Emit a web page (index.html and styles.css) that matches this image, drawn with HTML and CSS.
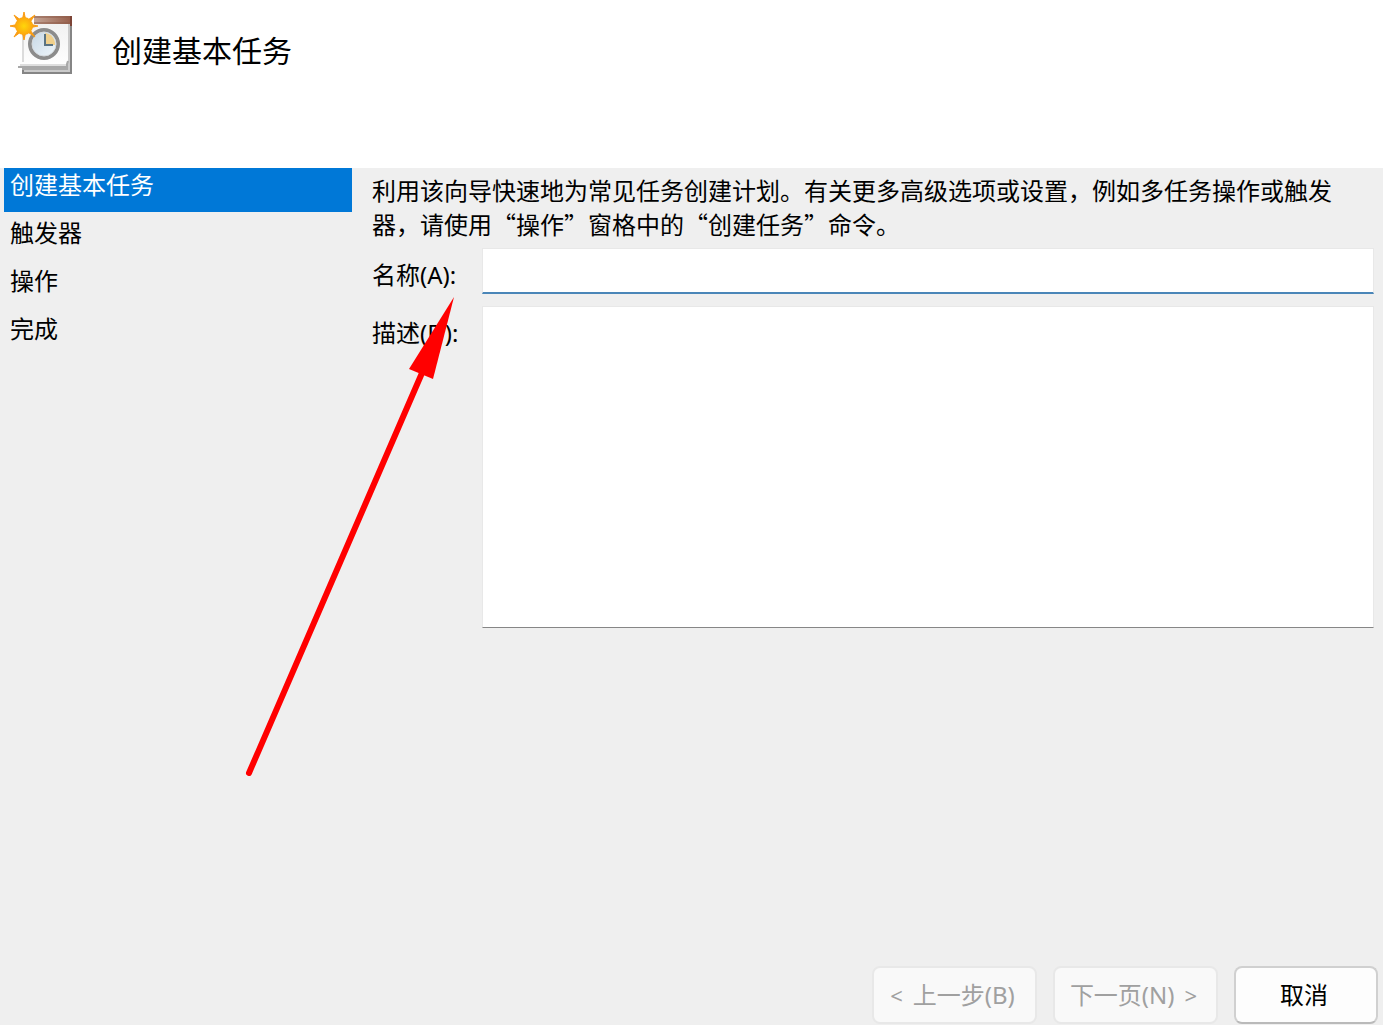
FILE: index.html
```html
<!DOCTYPE html>
<html lang="zh-CN">

<head>
    <meta charset="UTF-8">
    <meta name="viewport" content="width=device-width, initial-scale=1.0">
    <title>创建基本任务</title>
    <link rel="stylesheet" href="styles.css">
</head>

<body>
    <header class="header">
        <svg class="task-icon" viewBox="0 0 64 64" aria-hidden="true">
            <defs>
                <linearGradient id="wood" x1="0" y1="0" x2="1" y2="0">
                    <stop offset="0" stop-color="#c4a596" />
                    <stop offset="1" stop-color="#955c48" />
                </linearGradient>
                <linearGradient id="sheet" x1="0" y1="0" x2="0" y2="1">
                    <stop offset="0" stop-color="#f1f1f1" />
                    <stop offset="1" stop-color="#ffffff" />
                </linearGradient>
                <linearGradient id="face" x1="0" y1="0" x2="1" y2="1">
                    <stop offset="0" stop-color="#c3d5e4" />
                    <stop offset="1" stop-color="#f2f8fc" />
                </linearGradient>
                <radialGradient id="sun">
                    <stop offset="0" stop-color="#ffd60a" />
                    <stop offset="1" stop-color="#fda50f" />
                </radialGradient>
            </defs>
            <!-- back pages -->
            <path d="M12 12h50v50H12z" fill="#858585" />
            <path d="M14 12h46v48H14z" fill="#cacaca" />
            <path d="M12 56h44V12h2v46H12z" fill="#a9a9a9" />
            <!-- front page -->
            <path d="M12 12h46v38l-2 5H9v-3l3-3z" fill="url(#sheet)" />
            <path d="M13 14v36" stroke="#dcdcdc" stroke-width="2" />
            <path d="M8 55h48l2-6" fill="none" stroke="#a8a8a8" stroke-width="2" />
            <path d="M10 53h46" stroke="#dedede" stroke-width="2" />
            <!-- top bar -->
            <path d="M24 4h38v8H24z" fill="url(#wood)" />
            <path d="M24 4h38v2H24zM24 10h38v2H24z" fill="#8d5b49" opacity=".5" />
            <path d="M60 4h2v10h-2z" fill="#7c4436" />
            <!-- clock -->
            <circle cx="34" cy="32" r="14" fill="url(#face)" stroke="#8c8c8c" stroke-width="4" />
            <circle cx="34" cy="32" r="12" fill="none" stroke="#d5dade" stroke-width="1" />
            <path d="M35 33V21a11 11 0 0 1 10 12z" fill="#f0d08c" />
            <path d="M35 22v11h8" fill="none" stroke="#5a7382" stroke-width="2" />
            <!-- sun -->
            <path d="M14 0l3 14h-6zM14 28l3-14h-6zM0 14l14 3v-6zM28 14l-14 3v-6zM4 3l12 9-4 4zM25 3L12 12l4 4zM4 25l12-9-4-4zM25 25L12 16l4-4z" fill="#f99c14" stroke="#f99c14" />
            <circle cx="14" cy="14" r="9" fill="url(#sun)" />
        </svg>
        <h1 class="title">创建基本任务</h1>
    </header>
    <form class="wizard">
        <ol class="steps">
            <li class="step active" aria-current="step">创建基本任务</li>
            <li class="step">触发器</li>
            <li class="step">操作</li>
            <li class="step">完成</li>
        </ol>
        <main class="content">
            <p class="intro">利用该向导快速地为常见任务创建计划。有关更多高级选项或设置，例如多任务操作或触发器，请使用“操作”窗格中的“创建任务”命令。</p>
            <div class="fields">
                <label for="name">名称(A):</label>
                <input class="field" type="text" id="name" name="name">
                <label for="description">描述(D):</label>
                <textarea class="field description" id="description" name="description"></textarea>
            </div>
        </main>
        <footer class="buttons">
            <button class="btn" type="button" disabled><span class="sign">&lt;</span> 上一步(B)</button>
            <button class="btn" type="button" disabled>下一页(N) <span class="sign">&gt;</span></button>
            <button class="btn cancel" type="button">取消</button>
        </footer>
        <svg class="arrow" viewBox="0 0 220 490" aria-hidden="true">
            <path d="M9 483L182 83" stroke="#ff0000" stroke-width="6" stroke-linecap="round" />
            <path d="M214 7L169 79l24 10z" fill="#ff0000" />
        </svg>
    </form>
</body>

</html>
```
FILE: styles.css
```css
* {
    margin: 0;
    padding: 0;
    box-sizing: border-box;
}

body {
    display: flex;
    flex-direction: column;
    min-height: 100vh;
    background-color: #efefef;
    color: #000;
    font-family: "Noto Sans", "Noto Sans CJK SC", sans-serif;
    font-size: 24px;
    line-height: 34px;
}

.header {
    display: flex;
    align-items: flex-start;
    gap: 38px;
    height: 168px;
    padding: 12px 10px;
    background-color: #fff;
}

.task-icon {
    width: 64px;
    height: 64px;
}

.title {
    padding-top: 19px;
    font-size: 30px;
    font-weight: 400;
    line-height: 40px;
}

.wizard {
    position: relative;
    flex: 1;
    display: grid;
    grid-template-columns: 348px 1fr;
    grid-template-rows: 1fr auto;
    column-gap: 20px;
    padding: 0 5px 1px 4px;
}

.steps {
    display: flex;
    flex-direction: column;
    gap: 4px;
    list-style: none;
}

.step {
    height: 44px;
    padding-left: 6px;
}

.active {
    background-color: #0078d7;
    color: #fff;
}

.content {
    padding: 5px 4px 0 0;
}

.intro {
    padding-right: 36px;
    font-family: "Noto Sans CJK SC", sans-serif;
}

.fields {
    display: grid;
    grid-template-columns: 110px 1fr;
    row-gap: 12px;
    padding-top: 7px;
}

.fields label {
    padding-top: 10px;
}

.field {
    width: 100%;
    height: 46px;
    padding: 4px 8px;
    border: 1px solid #e8e8e8;
    border-bottom: 2px solid #4a86b8;
    background-color: #fff;
    font: inherit;
    outline: none;
}

.description {
    height: 322px;
    border-bottom: 1px solid #868686;
    resize: none;
}

.buttons {
    grid-column: 1 / -1;
    display: flex;
    justify-content: flex-end;
    gap: 16px;
}

.btn {
    display: flex;
    align-items: center;
    justify-content: center;
    gap: 10px;
    height: 58px;
    min-width: 165px;
    padding-right: 4px;
    border: 2px solid #e8e8e8;
    border-radius: 8px;
    background-color: #f9f9f9;
    color: #a0a0a0;
    font: inherit;
}

.sign {
    font-size: 22px;
}

.cancel {
    min-width: 144px;
    border-color: #d0d0d0;
    border-bottom-color: #bababa;
    background-color: #fdfdfd;
    color: #000;
}

.arrow {
    position: absolute;
    left: 240px;
    top: 122px;
    width: 220px;
    height: 490px;
    fill: none;
    pointer-events: none;
}
```
